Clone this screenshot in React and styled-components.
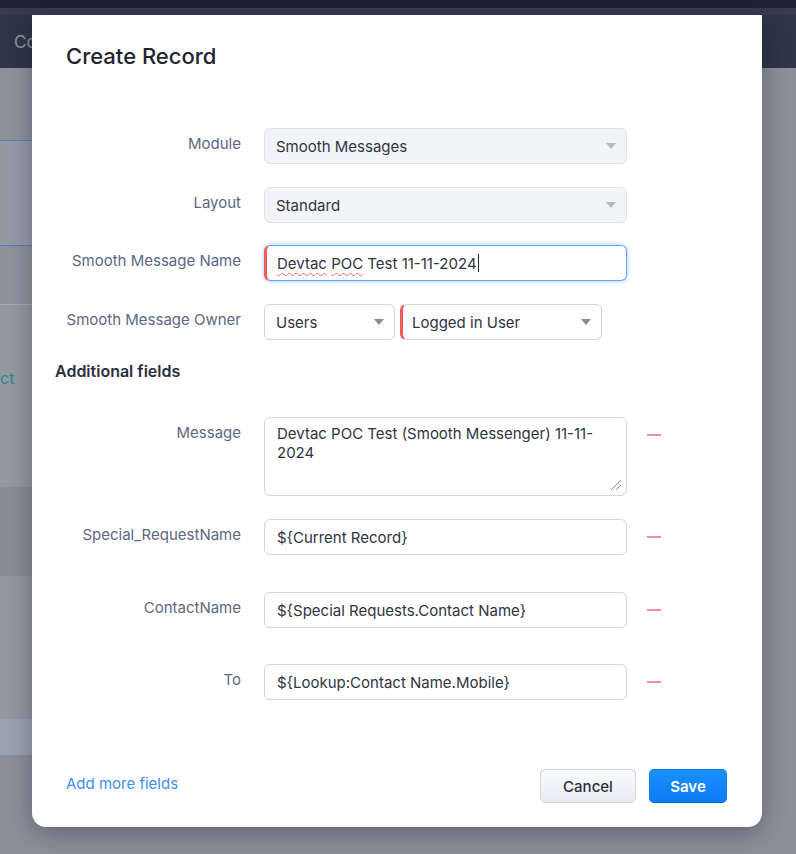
import React from 'react'
import styled, { createGlobalStyle } from 'styled-components'

const GlobalStyle = createGlobalStyle`
  html, body {
    margin:0;
    padding:0;
  }
  body {
    font-family: Inter, "Noto Sans", sans-serif;
  }
`

const Page = styled.div`
  position:relative;
  width:796px;
  height:854px;
  overflow:hidden;
  background:#8a8f99;
  display:flex;
  flex-direction:column;
`

const TopStrip = styled.div`
  height:8px;
  background:#1f2036;
  border-bottom:7px solid #393a50;
`

const AppHeader = styled.div`
  height:53px;
  background:#2e3546;
  display:flex;
  align-items:center;
  padding-left:14px;
  color:#8e96a5;
  font-size:17px;
`

const Body = styled.div`
  flex:1;
  display:flex;
`

const SidePanel = styled.div`
  width:220px;
  display:flex;
  flex-direction:column;
`

const Band = styled.div`
  height:${p => p.h}px;
  background:${p => p.bg};
  border-bottom:${p => (p.line ? `1px solid ${p.line}` : 'none')};
  padding-top:${p => p.pt || 0}px;
  box-sizing:content-box;
  color:#2e8a83;
  font-size:16px;
`

// modal

const Modal = styled.div`
  position:absolute;
  top:15px;
  left:32px;
  width:730px;
  height:812px;
  background:#fff;
  border-radius:0 0 14px 14px;
  box-shadow:0 6px 24px rgba(20,24,40,0.35);
  display:flex;
  flex-direction:column;
  box-sizing:border-box;
  padding:29px 0 24px 0;
`

const Title = styled.h2`
  margin:0 0 60px 0;
  padding-left:34px;
  font-size:22px;
  line-height:24px;
  font-weight:500;
  color:#22252d;
`

const Form = styled.div`
  display:flex;
  flex-direction:column;
`

const Row = styled.div`
  display:flex;
  align-items:flex-start;
  margin-bottom:${p => p.mb || 0}px;
`

const Label = styled.div`
  width:209px;
  text-align:right;
  padding-top:7px;
  margin-right:23px;
  font-size:15px;
  line-height:18px;
  color:#5d6882;
  flex-shrink:0;
`

const SectionTitle = styled.div`
  margin:22px 0 37px 0;
  padding-left:23px;
  font-size:16px;
  line-height:18px;
  font-weight:600;
  color:#2b2f3a;
`

const Select = styled.div`
  width:${p => p.w}px;
  height:36px;
  box-sizing:border-box;
  background:${p => (p.muted ? '#f3f4f6' : '#fff')};
  border:1px solid ${p => (p.muted ? '#e1e3e8' : '#d3d6dc')};
  border-left:${p => (p.required ? '3px solid #f25a5a' : undefined)};
  border-radius:6px;
  display:flex;
  align-items:center;
  justify-content:space-between;
  padding:0 10px 0 ${p => (p.required ? 9 : 11)}px;
  font-size:15px;
  color:#2f3442;
`

const Caret = styled.span`
  width:0;
  height:0;
  border-left:5px solid transparent;
  border-right:5px solid transparent;
  border-top:6px solid ${p => (p.muted ? '#b5b8be' : '#8a8d93')};
`

const OwnerGroup = styled.div`
  display:flex;
  gap:5px;
`

const TextField = styled.div`
  width:363px;
  height:36px;
  box-sizing:border-box;
  border:1px solid #d3d6dc;
  border-radius:6px;
  display:flex;
  align-items:center;
  padding:0 12px;
  font-size:15px;
  color:#2f3442;
  white-space:nowrap;
`

const ActiveField = styled(TextField)`
  border-color:#62a6f6;
  border-left:3px solid #f25a5a;
  box-shadow:0 0 4px rgba(70,150,245,0.55);
  padding-left:10px;
`

const Misspelt = styled.span`
  text-decoration:underline wavy #ec6a6a;
  text-decoration-thickness:1px;
  text-underline-offset:3px;
`

const TextCaret = styled.span`
  display:inline-block;
  width:1px;
  height:18px;
  background:#222;
  margin-left:1px;
`

const TextArea = styled.div`
  position:relative;
  width:363px;
  height:79px;
  box-sizing:border-box;
  border:1px solid #d3d6dc;
  border-radius:6px;
  padding:6px 12px;
  font-size:15px;
  line-height:19px;
  color:#2f3442;
`

const Grip = styled.svg`
  position:absolute;
  right:4px;
  bottom:4px;
`

const Remove = styled.span`
  width:14px;
  height:1.5px;
  background:#f29191;
  margin:17px 0 0 20px;
`

const Footer = styled.div`
  margin-top:auto;
  display:flex;
  align-items:center;
  padding:0 35px 0 34px;
`

const AddLink = styled.a`
  font-size:15px;
  color:#3f8ef0;
  margin-top:-5px;
  cursor:pointer;
`

const Actions = styled.div`
  margin-left:auto;
  display:flex;
  gap:13px;
`

const Button = styled.button`
  height:34px;
  width:${p => p.w}px;
  border-radius:5px;
  font-family:inherit;
  font-size:15px;
  cursor:pointer;
  ${p => p.primary ? `
    background:linear-gradient(#1a90ff, #0a7cf2);
    border:1px solid #0a7cf2;
    border-bottom-color:#0867cc;
    color:#fff;
    font-weight:600;
  ` : `
    background:linear-gradient(#fafbfc, #e8ebf1);
    border:1px solid #cdd2db;
    color:#2b2f3a;
    font-weight:500;
  `}
`

const extraFields = [
  { label:'Special_RequestName', value:'${Current Record}', mb:37 },
  { label:'ContactName', value:'${Special Requests.Contact Name}', mb:36 },
  { label:'To', value:'${Lookup:Contact Name.Mobile}', mb:0 },
]

function Backdrop() {
  return (
    <>
      <TopStrip />
      <AppHeader>Co</AppHeader>
      <Body>
        <SidePanel>
          <Band h={72} bg="#8c919b" line="#5a7cc0" />
          <Band h={104} bg="#949aa4" line="#5a7cc0" />
          <Band h={58} bg="#8e939d" line="#a3a8b1" />
          <Band h={119} pt={63} bg="#9398a1">ct</Band>
          <Band h={89} bg="#878c96" />
          <Band h={143} bg="#9297a0" />
          <Band h={36} bg="#99a2b0" />
        </SidePanel>
      </Body>
    </>
  )
}

export default function App() {
  return (
    <Page>
      <GlobalStyle />
      <Backdrop />
      <Modal>
        <Title>Create Record</Title>
        <Form>
          <Row mb={23}>
            <Label>Module</Label>
            <Select w={363} muted>Smooth Messages<Caret muted /></Select>
          </Row>
          <Row mb={22}>
            <Label>Layout</Label>
            <Select w={363} muted>Standard<Caret muted /></Select>
          </Row>
          <Row mb={23}>
            <Label>Smooth Message Name</Label>
            <ActiveField>
              <Misspelt>Devtac</Misspelt>&nbsp;<Misspelt>POC</Misspelt>&nbsp;Test 11-11-2024<TextCaret />
            </ActiveField>
          </Row>
          <Row>
            <Label>Smooth Message Owner</Label>
            <OwnerGroup>
              <Select w={131}>Users<Caret /></Select>
              <Select w={202} required>Logged in User<Caret /></Select>
            </OwnerGroup>
          </Row>

          <SectionTitle>Additional fields</SectionTitle>

          <Row mb={23}>
            <Label>Message</Label>
            <TextArea>
              Devtac POC Test (Smooth Messenger) 11-11-<br />2024
              <Grip width="12" height="12" viewBox="0 0 12 12">
                <path d="M11 1 L1 11 M11 6 L6 11" stroke="#8c8c8c" strokeWidth="1" fill="none" />
              </Grip>
            </TextArea>
            <Remove />
          </Row>
          {extraFields.map(f => (
            <Row key={f.label} mb={f.mb}>
              <Label>{f.label}</Label>
              <TextField>{f.value}</TextField>
              <Remove />
            </Row>
          ))}
        </Form>
        <Footer>
          <AddLink>Add more fields</AddLink>
          <Actions>
            <Button w={96}>Cancel</Button>
            <Button w={78} primary>Save</Button>
          </Actions>
        </Footer>
      </Modal>
    </Page>
  )
}
